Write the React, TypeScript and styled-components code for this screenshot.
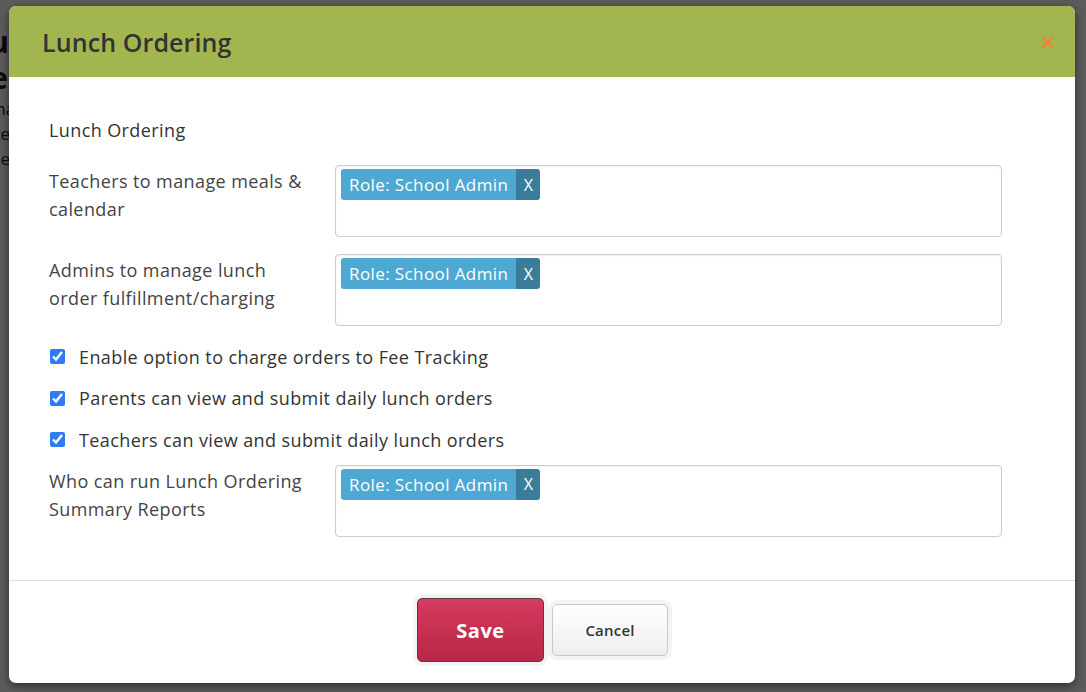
import React from "react";
import styled, { createGlobalStyle } from "styled-components";

const Global = createGlobalStyle`
  html, body { margin: 0; padding: 0; }
  body { width: 1086px; height: 692px; overflow: hidden; background: #fff; font-family: "Open Sans", "Liberation Sans", sans-serif; }
  * { box-sizing: border-box; }
`;

const Page = styled.div`
  position: relative;
  width: 1086px;
  height: 692px;
  overflow: hidden;
`;

const BackPage = styled.div`
  width: 9px;
  display: flex;
  flex-direction: column;
  align-items: flex-end;
  padding-top: 24px;
  color: #222;
`;

const BackTitle = styled.div<{ $shift?: number }>`
  font-size: 30px;
  font-weight: 700;
  line-height: 36px;
  white-space: nowrap;
  margin-right: ${(p) => -(p.$shift ?? 0)}px;
`;

const BackText = styled.div<{ $shift?: number }>`
  font-size: 17px;
  line-height: 25px;
  white-space: nowrap;
  margin-right: ${(p) => -(p.$shift ?? 0)}px;
`;

const Backdrop = styled.div`
  position: absolute;
  inset: 0;
  background: rgba(0, 0, 0, 0.64);
`;

const Modal = styled.div`
  position: absolute;
  left: 9px;
  top: 6px;
  width: 1066px;
  height: 677px;
  background: #fff;
  border-radius: 7px;
  box-shadow: 0 3px 10px rgba(0, 0, 0, 0.5);
  display: flex;
  flex-direction: column;
  overflow: hidden;
`;

const Header = styled.div`
  height: 71px;
  background: #a2b650;
  display: flex;
  align-items: center;
  justify-content: space-between;
  padding: 0 16px 0 33px;
  flex-shrink: 0;
`;

const Title = styled.h1`
  margin: 0;
  font-size: 25px;
  font-weight: 600;
  color: #333;
  letter-spacing: 0.1px;
`;

const Close = styled.button`
  border: 0;
  background: none;
  padding: 0;
  width: 24px;
  height: 24px;
  display: flex;
  align-items: center;
  justify-content: center;
  margin-top: 2px;
`;

const Body = styled.div`
  flex: 1;
  padding: 41px 73px 0 40px;
  display: flex;
  flex-direction: column;
  letter-spacing: 0.4px;
`;

const SectionTitle = styled.div`
  font-size: 18px;
  color: #333;
  line-height: 24px;
  margin-bottom: 23px;
`;

const FieldRow = styled.div<{ $gap?: number }>`
  display: grid;
  grid-template-columns: 286px 667px;
  align-items: start;
  margin-bottom: ${(p) => p.$gap ?? 17}px;
`;

const Label = styled.div`
  font-size: 18px;
  line-height: 28px;
  color: #444;
  width: 262px;
  padding-top: 2px;
`;

const TagBox = styled.div`
  height: 72px;
  border: 1px solid #cccccc;
  border-radius: 4px;
  box-shadow: inset 0 1px 2px rgba(0, 0, 0, 0.06);
  padding: 3px 5px;
  display: flex;
  align-items: flex-start;
`;

const Tag = styled.div`
  display: flex;
  height: 31px;
  border-radius: 3px;
  overflow: hidden;
  font-size: 17px;
  color: #fff;
`;

const TagText = styled.span`
  background: #4ea8d4;
  padding: 0 8px;
  display: flex;
  align-items: center;
`;

const TagRemove = styled.span`
  background: #3a7d9a;
  width: 24px;
  display: flex;
  align-items: center;
  justify-content: center;
  font-size: 16px;
  letter-spacing: 0;
`;

const CheckRow = styled.label`
  display: flex;
  align-items: center;
  height: 41.5px;
  font-size: 18px;
  color: #333;
`;

const Check = styled.input`
  width: 15px;
  height: 15px;
  margin: 0 14px 0 1px;
  accent-color: #2f7bf5;
`;

const Checks = styled.div`
  display: flex;
  flex-direction: column;
  margin-top: -7px;
  margin-bottom: 4px;
`;

const Footer = styled.div`
  height: 103px;
  border-top: 1px solid #dedede;
  display: flex;
  align-items: center;
  justify-content: center;
  padding-left: 1px;
  padding-bottom: 4px;
  flex-shrink: 0;
`;

const BtnWrap = styled.div`
  background: #f3f3f3;
  padding: 4px;
  border-radius: 9px;
  display: flex;
`;

const SaveButton = styled.button`
  width: 127px;
  height: 64px;
  border-radius: 5px;
  border: 1px solid #5a3a44;
  background: linear-gradient(#d63c61, #c4304f 55%, #b92748);
  color: #fff;
  font-family: inherit;
  font-weight: 700;
  font-size: 20px;
  letter-spacing: 0.5px;
`;

const CancelButton = styled.button`
  width: 116px;
  height: 52px;
  border-radius: 5px;
  border: 1px solid #c9c9c9;
  background: linear-gradient(#ffffff, #eeeeee);
  color: #333;
  font-family: inherit;
  font-weight: 600;
  font-size: 15px;
  letter-spacing: 0.2px;
`;

const fields = [
  "Teachers to manage meals & calendar",
  "Admins to manage lunch order fulfillment/charging",
];

const checks = [
  "Enable option to charge orders to Fee Tracking",
  "Parents can view and submit daily lunch orders",
  "Teachers can view and submit daily lunch orders",
];

function RoleField({ label, gap }: { label: string; gap?: number }) {
  return (
    <FieldRow $gap={gap}>
      <Label>{label}</Label>
      <TagBox>
        <Tag>
          <TagText>Role: School Admin</TagText>
          <TagRemove>X</TagRemove>
        </Tag>
      </TagBox>
    </FieldRow>
  );
}

export default function App() {
  return (
    <Page>
      <Global />
      <BackPage>
        <BackTitle>Menu</BackTitle>
        <BackTitle $shift={18}>Feed</BackTitle>
        <BackText $shift={6}>Mana</BackText>
        <BackText $shift={1}>Date</BackText>
        <BackText $shift={1}>Time</BackText>
      </BackPage>
      <Backdrop />
      <Modal>
        <Header>
          <Title>Lunch Ordering</Title>
          <Close aria-label="Close">
            <svg width="13" height="13" viewBox="0 0 13 13">
              <path d="M2 2 L11 11 M11 2 L2 11" stroke="#e48a3a" strokeWidth="3" strokeLinecap="round" />
            </svg>
          </Close>
        </Header>
        <Body>
          <SectionTitle>Lunch Ordering</SectionTitle>
          {fields.map((f) => (
            <RoleField key={f} label={f} />
          ))}
          <Checks>
            {checks.map((c) => (
              <CheckRow key={c}>
                <Check type="checkbox" defaultChecked />
                {c}
              </CheckRow>
            ))}
          </Checks>
          <RoleField label="Who can run Lunch Ordering Summary Reports" gap={0} />
        </Body>
        <Footer>
          <BtnWrap>
            <SaveButton>Save</SaveButton>
          </BtnWrap>
          <BtnWrap>
            <CancelButton>Cancel</CancelButton>
          </BtnWrap>
        </Footer>
      </Modal>
    </Page>
  );
}
